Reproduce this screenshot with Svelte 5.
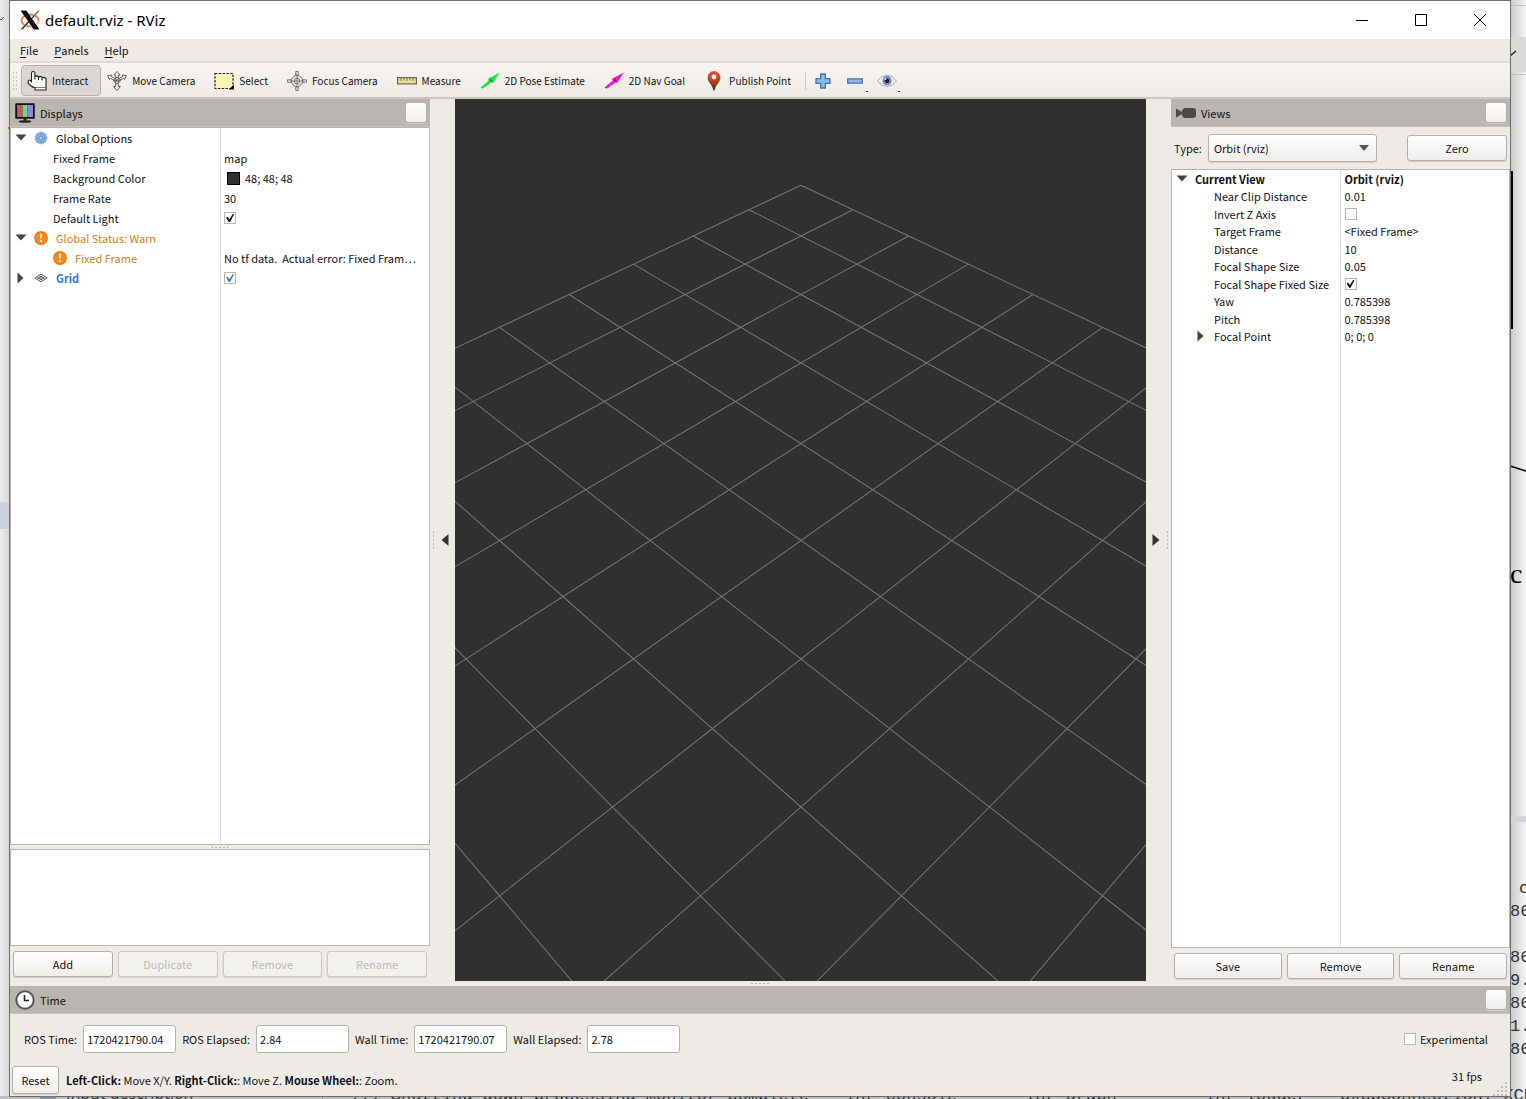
<script>
  const menus = ["File", "Panels", "Help"];

  const tools = [
    { icon: "hand", label: "Interact", active: true },
    { icon: "move", label: "Move Camera" },
    { icon: "select", label: "Select" },
    { icon: "focus", label: "Focus Camera" },
    { icon: "measure", label: "Measure" },
    { icon: "arrow", label: "2D Pose Estimate", color: "#1ee63c", dark: "#0fa326" },
    { icon: "arrow", label: "2D Nav Goal", color: "#fb14d8", dark: "#a80b92" },
    { icon: "pin", label: "Publish Point" },
  ];

  let displays = $state([
    { name: "Global Options", depth: 0, open: true, icon: "gear" },
    { name: "Fixed Frame", depth: 1, value: "map" },
    { name: "Background Color", depth: 1, value: "48; 48; 48", swatch: true },
    { name: "Frame Rate", depth: 1, value: "30" },
    { name: "Default Light", depth: 1, checked: true },
    { name: "Global Status: Warn", depth: 0, open: true, icon: "warn", kind: "warn" },
    {
      name: "Fixed Frame",
      depth: 1,
      icon: "warn",
      kind: "warn",
      value: "No tf data.\u00a0 Actual error: Fixed Fram⋯",
    },
    { name: "Grid", depth: 0, open: false, icon: "grid", kind: "enabled", checked: true },
  ]);

  let view = $state([
    { name: "Current View", depth: 0, open: true, kind: "bold", value: "Orbit (rviz)" },
    { name: "Near Clip Distance", depth: 1, value: "0.01" },
    { name: "Invert Z Axis", depth: 1, checked: false },
    { name: "Target Frame", depth: 1, value: "<Fixed Frame>" },
    { name: "Distance", depth: 1, value: "10" },
    { name: "Focal Shape Size", depth: 1, value: "0.05" },
    { name: "Focal Shape Fixed Size", depth: 1, checked: true },
    { name: "Yaw", depth: 1, value: "0.785398" },
    { name: "Pitch", depth: 1, value: "0.785398" },
    { name: "Focal Point", depth: 1, open: false, sub: true, value: "0; 0; 0" },
  ]);

  const clocks = [
    { id: "ros-time", label: "ROS Time:", value: "1720421790.04" },
    { id: "ros-elapsed", label: "ROS Elapsed:", value: "2.84" },
    { id: "wall-time", label: "Wall Time:", value: "1720421790.07" },
    { id: "wall-elapsed", label: "Wall Elapsed:", value: "2.78" },
  ];

  // orbit camera: distance 10, yaw and pitch 45deg, vertical fov 45deg
  const FOCAL = 441 / Math.tan(Math.PI / 8);

  function project(x, y) {
    const depth = 10 + (x + y) / 2;
    return [
      (FOCAL * (x - y) * Math.SQRT1_2) / depth,
      (-FOCAL * (x + y)) / 2 / depth,
    ];
  }

  const gridLines = [];
  for (let i = -5; i <= 5; i++) {
    gridLines.push([project(i, -5), project(i, 5)]);
    gridLines.push([project(-5, i), project(5, i)]);
  }
</script>

{#snippet arrow(open)}
  <svg class="twisty" width="12" height="12" viewBox="0 0 12 12" aria-hidden="true">
    {#if open}
      <path d="M0.5 2.5h11L6 8.5z" fill="#444" />
    {:else}
      <path d="M2.5 0.5v11L8.5 6z" fill="#444" />
    {/if}
  </svg>
{/snippet}

{#snippet rowIcon(icon)}
  <svg class="row-icon" width="14" height="14" viewBox="0 0 14 14" aria-hidden="true">
    {#if icon === "gear"}
      <circle cx="7" cy="7" r="5.7" fill="#7ba4d9" stroke="#8fb2e0" stroke-width="1.6" stroke-dasharray="2 1" />
      <circle cx="7" cy="7" r="3.3" fill="none" stroke="#a9c6ec" stroke-width="0.8" />
      <path d="M7 2v10M2 7h10M3.5 3.5l7 7M10.5 3.5l-7 7" stroke="#5f8cc8" stroke-width="0.6" />
      <circle cx="7" cy="7" r="1.2" fill="#b9d1f0" />
    {:else if icon === "warn"}
      <circle cx="7" cy="7" r="6.9" fill="#e8760c" />
      <circle cx="7" cy="7" r="5.8" fill="#f68a1e" />
      <path d="M6 2.7h2l-.4 5.3h-1.2z" fill="#fff" />
      <circle cx="7" cy="10.2" r="1.1" fill="#fff" />
    {:else}
      <path
        d="M7 3.2 13.2 7 7 10.8 0.8 7zM4.9 4.5l6.2 3.8M9.1 4.5 2.9 8.3M2.9 5.7l6.2 3.8M11.1 5.7 4.9 9.5"
        fill="none"
        stroke="#555"
        stroke-width="0.9"
      />
    {/if}
  </svg>
{/snippet}

{#snippet tree(rows, label, dense)}
  <div class="tree">
    <table class:dense aria-label={label}>
      <tbody>
        {#each rows as row}
          <tr class={row.kind}>
            <td>
              <div class="cell" class:child={row.depth === 1} class:sub={row.sub}>
                {#if row.open !== undefined}{@render arrow(row.open)}{/if}
                {#if row.icon}{@render rowIcon(row.icon)}{/if}
                <span>{row.name}</span>
              </div>
            </td>
            <td>
              <div class="cell value">
                {#if row.swatch}<span class="swatch"></span>{/if}
                {#if row.checked !== undefined}
                  <input type="checkbox" bind:checked={row.checked} aria-label={row.name} />
                {/if}
                {#if row.value}<span>{row.value}</span>{/if}
              </div>
            </td>
          </tr>
        {/each}
      </tbody>
    </table>
  </div>
{/snippet}

<div class="desktop">
  <!-- whatever is open behind the RViz window -->
  <svg class="backdrop" viewBox="0 0 1526 1099" preserveAspectRatio="xMaxYMax meet" aria-hidden="true">
    <defs>
      <linearGradient id="shade-right">
        <stop offset="0" stop-color="#c9c9c9" />
        <stop offset="1" stop-color="#f5f5f5" />
      </linearGradient>
      <linearGradient id="shade-left">
        <stop offset="0" stop-color="#ececec" />
        <stop offset="1" stop-color="#d6d6d6" />
      </linearGradient>
    </defs>
    <rect width="10" height="1099" fill="url(#shade-left)" />
    <rect y="502" width="10" height="27" fill="#cdd0df" />
    <path d="M0 19l1 1 3-3" fill="none" stroke="#445" />
    <rect x="8" y="127" width="1" height="2" fill="#b5651d" />
    <rect x="1510" width="16" height="1099" fill="url(#shade-right)" />
    <path d="M1510 5.5h16M1510 74.5h16" stroke="#c4c4c4" />
    <rect x="1510" y="37" width="16" height="35" fill="#d9d9d9" />
    <path d="M1510 56l6-5" stroke="#222" stroke-width="1.5" />
    <rect x="1510" y="171" width="3" height="158" fill="#000" />
    <path d="M1510 466l16 5" stroke="#000" stroke-width="1.5" />
    <text x="1510" y="583" class="serif">c</text>
    <rect x="1510" y="816" width="16" height="6" fill="#d4d4d8" />
    <g class="mono">
      <text x="1519" y="893">c</text>
      <text x="1510" y="916">86</text>
      <text x="1510" y="962">86</text>
      <text x="1510" y="985">9.</text>
      <text x="1510" y="1008">86</text>
      <text x="1510" y="1031">1.</text>
      <text x="1510" y="1054">86</text>
    </g>
    <rect y="1096" width="1510" height="3" fill="#bdbdbd" />
    <rect x="40" y="1096" width="16" height="3" fill="#7c8f9b" />
    <path d="M322.5 1096v3" stroke="#999" />
    <text x="66" y="1099" class="sans">Input description</text>
    <g class="mono">
      <text x="350" y="1100">... Shutting down processing monitor complete</text>
      <text x="845" y="1100">lnr console</text>
      <text x="1025" y="1100">lnr graph</text>
      <text x="1205" y="1100">lnr logger</text>
      <text x="1340" y="1100">QxcbConnection: XCB</text>
    </g>
  </svg>

  <div class="window">
    <header class="titlebar">
      <svg width="20" height="20" viewBox="0 0 20 20" aria-hidden="true">
        <ellipse cx="10" cy="10.5" rx="8.5" ry="6" fill="none" stroke="#f0783c" stroke-width="1.8" />
        <path d="M10 16.5a8.5 6 0 0 0 8.5-6" fill="none" stroke="#f6d0ae" stroke-width="2" />
        <path d="M18 .5h1.8L3 19.5H.3z" fill="#222" stroke="#fff" stroke-width="0.6" />
        <path d="M.5 .5h5.8L19.5 19.5h-5.8z" fill="#111" />
      </svg>
      <h1>default.rviz - RViz</h1>
      <div class="window-controls">
        <button aria-label="Minimize">
          <svg width="12" height="12" viewBox="0 0 12 12"><path d="M0 6.5h12" stroke="#000" /></svg>
        </button>
        <button aria-label="Maximize">
          <svg width="12" height="12" viewBox="0 0 12 12"><path d="M.5 .5h11v11H.5z" fill="none" stroke="#000" /></svg>
        </button>
        <button aria-label="Close">
          <svg width="12" height="12" viewBox="0 0 12 12"><path d="M0 0l12 12M12 0 0 12" stroke="#000" /></svg>
        </button>
      </div>
    </header>

    <nav class="menubar">
      {#each menus as menu}
        <button><u>{menu[0]}</u>{menu.slice(1)}</button>
      {/each}
    </nav>

    <div class="toolbar" role="toolbar" aria-label="Tools">
      <span class="grip"></span>
      {#each tools as tool}
        <button class="tool" class:active={tool.active}>
          <svg width="20" height="20" viewBox="0 0 20 20" aria-hidden="true">
            {#if tool.icon === "hand"}
              <path
                d="M4.5 11V2.2a1.7 1.7 0 0 1 3.4 0V8 5.8q1.900-1.800 3.600 0V8.500 6q2-1.500 3.600.3V9 6.800q2-1.200 3.900.8V19H8V17Q3 15 1.200 12 .6 9.300 2.200 9q1.500.2 2.300 2z"
                fill="#fff"
                stroke="#222"
                stroke-width="1.1"
                stroke-linejoin="round"
              />
              <path d="M8 16.5h11" stroke="#777" />
            {:else if tool.icon === "move"}
              <g fill="#f6f6f6" stroke="#555" stroke-width="0.9">
                <path d="M.7 4.5l4.3-.3-.8 1.3L10 8.5l5.800-3-.8-1.300 4.300.3-1.800 4-.8-1.300L10 10.800 3.300 7.200l-.8 1.300z" />
                <path d="M10 .5l3 3.500h-1.700v11.500H13.500L10 19.500l-3.500-4h2.200V4H7z" />
                <path d="M10 6l4 3.500-4 3.500-4-3.500z" fill="none" />
              </g>
              <circle cx="10" cy="9.5" r="1.2" fill="#777" />
            {:else if tool.icon === "select"}
              <rect x="1" y="2.5" width="18" height="15" fill="#fdf3b4" stroke="#222" stroke-width="1.2" stroke-dasharray="2.5 1.3" />
              <path d="M19.8 13.5v5h-5z" fill="#000" />
            {:else if tool.icon === "focus"}
              <g fill="none" stroke="#777" stroke-width="1">
                <path d="M8.8 .5h2.4v19H8.8zM.5 8.8v2.4h19V8.8z" fill="#e6e6e6" />
                <circle cx="10" cy="10" r="5.5" fill="#ececec" />
                <circle cx="10" cy="10" r="2.8" />
                <path d="M10 3v14M3 10h14" />
              </g>
            {:else if tool.icon === "measure"}
              <rect x=".6" y="6.6" width="18.8" height="6.3" fill="#eadf9d" stroke="#6d6746" stroke-width="1.2" />
              <path d="M4 7v3M7 7v2.5M10 7v3M13 7v2.5M16 7v3" stroke="#6d6746" stroke-width="0.9" />
            {:else if tool.icon === "arrow"}
              <path d="M.5 16.5L9 9.3 7.5 8 19.7 1.5 13.5 11.5 12 11.2 2.5 17.8z" fill={tool.color} />
              <path d="M9 9.3l2-1.8 2.5 4-1.5-.3z" fill={tool.dark} />
            {:else}
              <path d="M10 0a6.5 6.5 0 0 1 6.5 6.5C16.5 11 12 13 10.5 19.5h-1C8 13 3.5 11 3.5 6.5A6.5 6.5 0 0 1 10 0z" fill="url(#pin-fill)" />
              <circle cx="10" cy="6" r="2.4" fill="#fff" />
              <defs>
                <linearGradient id="pin-fill" x2="0" y2="1">
                  <stop offset="0" stop-color="#e8573c" />
                  <stop offset=".45" stop-color="#c0432a" />
                  <stop offset="1" stop-color="#4d2b12" />
                </linearGradient>
              </defs>
            {/if}
          </svg>
          {tool.label}
        </button>
      {/each}
      <span class="separator"></span>
      <button class="mini" aria-label="Add tool">
        <svg width="16" height="16" viewBox="0 0 16 16">
          <path d="M5.7 1h4.6v4.7H15v4.6h-4.7V15H5.7v-4.7H1V5.7h4.7z" fill="#8db8e8" stroke="#3f73b5" stroke-width="1.3" />
        </svg>
      </button>
      <button class="mini menu" aria-label="Remove tool">
        <svg width="16" height="16" viewBox="0 0 16 16">
          <path d="M.7 5.9h14.6v4.2H.7z" fill="#8db8e8" stroke="#3f73b5" stroke-width="1.3" />
        </svg>
      </button>
      <button class="mini menu" aria-label="Toolbar visibility">
        <svg width="20" height="16" viewBox="0 0 20 16">
          <path d="M.5 8Q4.5 2.2 10 2.2T19.5 8q-4 5.500-9.500 5.500T.5 8z" fill="#f1f1f1" stroke="#a9a9a9" />
          <circle cx="10" cy="7.7" r="4.6" fill="#7186c2" />
          <circle cx="10" cy="7.7" r="2.2" fill="#10131f" />
          <circle cx="8.5" cy="6" r="1" fill="#dfe6fa" />
        </svg>
      </button>
    </div>

    <main>
      <section class="dock">
        <div class="dock-header">
          <svg width="20" height="20" viewBox="0 0 20 20" aria-hidden="true">
            <path d="M1 1h18v14H1z" fill="#111" stroke="#111" stroke-width="1.5" stroke-linejoin="round" />
            <path d="M2 2h5.5v12H2z" fill="#b9605f" />
            <path d="M7.5 2h5v12h-5z" fill="#7fd08a" />
            <path d="M12.5 2H18v12h-5.5z" fill="#8b8be0" />
            <path d="M8.5 15.5h3v2h-3z" fill="#222" />
            <ellipse cx="10" cy="18.5" rx="6.5" ry="1.3" fill="#222" />
          </svg>
          <h2>Displays</h2>
          <button class="btn close" aria-label="Close Displays"></button>
        </div>
        {@render tree(displays, "Displays", false)}
        <div class="splitter horizontal"><span class="dots"></span></div>
        <div class="help"></div>
        <div class="actions">
          <button class="btn">Add</button>
          <button class="btn" disabled>Duplicate</button>
          <button class="btn" disabled>Remove</button>
          <button class="btn" disabled>Rename</button>
        </div>
      </section>

      <div class="splitter left">
        <span class="dots tall"></span>
        <button class="collapse" aria-label="Hide left dock">
          <svg width="8" height="12" viewBox="0 0 8 12"><path d="M7.5 0v12L.5 6z" fill="#333" /></svg>
        </button>
      </div>

      <svg class="render" viewBox="-346 -441 691 881" preserveAspectRatio="xMidYMid slice" role="img" aria-label="3D view">
        {#each gridLines as [from, to]}
          <line x1={from[0]} y1={from[1]} x2={to[0]} y2={to[1]} />
        {/each}
      </svg>

      <div class="splitter right">
        <button class="collapse" aria-label="Hide right dock">
          <svg width="8" height="12" viewBox="0 0 8 12"><path d="M.5 0v12l7-6z" fill="#333" /></svg>
        </button>
        <span class="dots tall"></span>
      </div>

      <section class="dock">
        <div class="dock-header">
          <svg width="20" height="20" viewBox="0 0 20 20" aria-hidden="true">
            <path d="M0 5.5L6 9V7.5Q7 5 9 5h8q3 0 3 3v4q0 3-3 3H9q-2 0-3-2.5V11L0 14.5z" fill="#4a4a4a" />
          </svg>
          <h2>Views</h2>
          <button class="btn close" aria-label="Close Views"></button>
        </div>
        <div class="view-type">
          <label for="view-type">Type:</label>
          <div class="select">
            <select id="view-type" class="btn">
              <option>Orbit (rviz)</option>
            </select>
            <svg width="10" height="6" viewBox="0 0 10 6" aria-hidden="true"><path d="M0 0h10L5 6z" fill="#555" /></svg>
          </div>
          <button class="btn zero">Zero</button>
        </div>
        {@render tree(view, "Current view", true)}
        <div class="actions view-actions">
          <button class="btn">Save</button>
          <button class="btn">Remove</button>
          <button class="btn">Rename</button>
        </div>
      </section>
    </main>

    <div class="splitter bottom"><span class="dots"></span></div>

    <section class="time">
      <div class="dock-header">
        <svg width="20" height="20" viewBox="0 0 20 20" aria-hidden="true">
          <circle cx="10" cy="10" r="8.7" fill="#fff" stroke="#555" stroke-width="2" />
          <path d="M9.5 5v5.5H14" fill="none" stroke="#222" stroke-width="1.6" />
        </svg>
        <h2>Time</h2>
        <button class="btn close" aria-label="Close Time"></button>
      </div>
      <div class="clocks">
        {#each clocks as clock}
          <label for={clock.id}>{clock.label}</label>
          <input id={clock.id} type="text" value={clock.value} readonly />
        {/each}
        <label class="experimental"><input type="checkbox" />Experimental</label>
      </div>
    </section>

    <footer>
      <button class="btn reset">Reset</button>
      <p><b>Left-Click:</b> Move X/Y. <b>Right-Click:</b>: Move Z. <b>Mouse Wheel:</b>: Zoom.</p>
      <span class="fps">31 fps</span>
      <span class="size-grip"></span>
    </footer>
  </div>
</div>

<style>
  .desktop {
    position: relative;
    display: flex;
    height: 100vh;
    min-height: 700px;
    overflow: hidden;
    box-sizing: border-box;
    padding: 0 15px 2px 9px;
    background: #f3f3f3;
    font-family: "Noto Sans CJK SC", "Noto Sans", sans-serif;
    font-size: 11px;
    line-height: 16px;
    color: #111;
  }

  .backdrop {
    position: absolute;
    inset: 0;
    width: 100%;
    height: 100%;
  }

  .mono {
    font: 17px "Liberation Mono", monospace;
    fill: #333;
  }

  .sans {
    font: 16px "Open Sans", sans-serif;
    fill: #333;
  }

  .serif {
    font: 28px "Liberation Serif", serif;
    fill: #000;
  }

  .window {
    position: relative;
    flex: 1;
    min-width: 0;
    display: flex;
    flex-direction: column;
    box-sizing: border-box;
    border: 1px solid #6e6e6e;
    background: #eeebe6;
  }

  button,
  input,
  select {
    font: inherit;
    color: inherit;
    margin: 0;
  }

  button {
    display: inline-flex;
    align-items: center;
    justify-content: center;
    padding: 0;
    border: none;
    background: none;
  }

  h1,
  h2,
  p {
    margin: 0;
    font-size: inherit;
    font-weight: normal;
  }

  /* title bar and menus */
  .titlebar {
    display: flex;
    align-items: center;
    height: 38px;
    padding: 0 1px 0 10px;
    gap: 5px;
    background: #fff;
    flex-shrink: 0;
  }

  h1 {
    font-family: "Noto Sans", "Open Sans", sans-serif;
    font-size: 15px;
    color: #000;
  }

  .window-controls {
    display: flex;
    margin-left: auto;
    align-self: stretch;
  }

  .window-controls button {
    width: 59px;
  }

  .menubar {
    display: flex;
    align-items: center;
    gap: 16px;
    height: 22px;
    padding: 0 10px;
    box-sizing: border-box;
    flex-shrink: 0;
  }

  .menubar u {
    text-underline-offset: 2px;
  }

  /* toolbar */
  .toolbar {
    display: flex;
    align-items: center;
    height: 38px;
    padding: 1px 2px 0;
    box-sizing: border-box;
    border-top: 2px solid #e0dcd7;
    border-bottom: 2px solid #cbc7c1;
    background: linear-gradient(#f8f5f0, #eeebe6);
    flex-shrink: 0;
  }

  .grip {
    width: 9px;
    height: 20px;
    background: radial-gradient(circle, #c9c5c0 1px, transparent 1px) 0 0 / 3px 4px;
    background-clip: content-box;
    padding-right: 3px;
    box-sizing: border-box;
  }

  .tool {
    gap: 5px;
    height: 31px;
    padding: 0 12px 0 5px;
    border: 1px solid transparent;
    border-radius: 4px;
    box-sizing: border-box;
    font-size: 10px;
    white-space: nowrap;
  }

  .tool.active {
    border-color: #b5b1ac;
    background: #dad6d2;
  }

  .separator {
    width: 1px;
    height: 18px;
    margin: 0 1px;
    background: #cdc9c4;
  }

  .mini {
    position: relative;
    width: 32px;
    height: 30px;
  }

  .mini.menu::after {
    content: "";
    position: absolute;
    right: 3px;
    bottom: 4px;
    width: 2px;
    height: 1px;
    background: #444;
  }

  /* docks */
  main {
    flex: 1;
    min-height: 0;
    display: grid;
    grid-template-columns: 420px 25px minmax(0, 1fr) 25px 339px;
  }

  .dock {
    display: flex;
    flex-direction: column;
    min-height: 0;
  }

  .dock-header {
    display: flex;
    align-items: center;
    gap: 5px;
    height: 28px;
    padding: 0 3px 0 5px;
    box-sizing: border-box;
    border-bottom: 1px solid #c6c2be;
    background: #b9b5b1;
    flex-shrink: 0;
  }

  .btn {
    box-sizing: border-box;
    height: 26px;
    border: 1px solid #b3afaa;
    border-radius: 3px;
    background: linear-gradient(#fefefe, #f0eeeb);
    box-shadow: 0 1px 1px #d2cec9;
  }

  .btn:disabled {
    border-color: #cbc7c2;
    background: #f3f1ee;
    color: #bdbab7;
  }

  .close {
    width: 22px;
    height: 21px;
    margin-left: auto;
  }

  .tree,
  .help {
    box-sizing: border-box;
    border: 1px solid #b9b5b1;
    background: #fff;
  }

  .tree {
    flex: 1;
    min-height: 0;
    overflow: hidden;
    background: linear-gradient(#dcdcdc, #dcdcdc) 50% 0 / 1px 100% no-repeat #fff;
  }

  .help {
    height: 97px;
    flex-shrink: 0;
  }

  table {
    width: 100%;
    border-collapse: collapse;
    table-layout: fixed;
  }

  td {
    height: 20px;
    padding: 0;
  }

  .dense {
    height: 175px;
  }

  .dense td {
    height: auto;
  }

  .dense .cell {
    height: 17px;
  }

  .cell {
    display: flex;
    align-items: center;
    height: 20px;
    padding-left: 4px;
    white-space: nowrap;
  }

  .cell.child {
    padding-left: 42px;
  }

  .cell.sub {
    padding-left: 23px;
  }

  .twisty {
    margin-right: 7px;
    flex-shrink: 0;
  }

  .row-icon {
    margin-right: 8px;
    flex-shrink: 0;
  }

  .swatch {
    width: 13px;
    height: 13px;
    margin: 0 5px 0 3px;
    border: 1px solid #000;
    box-sizing: border-box;
    background: #303030;
  }

  .warn {
    color: #cb8216;
  }

  .warn .value {
    color: #111;
  }

  .enabled {
    color: #2f7bcf;
    font-weight: bold;
  }

  .bold {
    font-weight: bold;
  }

  input[type="checkbox"] {
    appearance: none;
    width: 12px;
    height: 12px;
    box-sizing: border-box;
    border: 1px solid #b9b5b0;
    background: #fff;
  }

  input[type="checkbox"]:checked::before {
    content: "";
    display: block;
    width: 8px;
    height: 8px;
    margin: 1px;
    background: currentColor;
    clip-path: polygon(0 45%, 22% 38%, 42% 65%, 85% 0, 100% 5%, 50% 100%, 35% 100%);
  }

  .actions {
    display: flex;
    gap: 5px;
    padding: 5px 3px 4px;
    flex-shrink: 0;
  }

  .view-actions {
    padding-bottom: 2px;
  }

  .actions .btn {
    flex: 1;
  }

  .view-type {
    display: flex;
    align-items: center;
    gap: 6px;
    height: 42px;
    padding: 0 3px;
    box-sizing: border-box;
  }

  .select {
    position: relative;
    width: 169px;
  }

  .select select {
    appearance: none;
    width: 100%;
    height: 28px;
    padding: 0 5px;
  }

  .select svg {
    position: absolute;
    right: 8px;
    top: 11px;
    pointer-events: none;
  }

  .zero {
    width: 100px;
    margin-left: auto;
  }

  /* splitters */
  .splitter {
    display: flex;
    align-items: center;
    justify-content: center;
    flex-shrink: 0;
  }

  .splitter.horizontal {
    height: 4px;
  }

  .splitter.bottom {
    height: 5px;
  }

  .splitter.left,
  .splitter.right {
    justify-content: space-between;
    padding: 0 6px 0 2px;
  }

  .splitter.right {
    padding: 0 2px 0 6px;
  }

  .dots {
    width: 21px;
    height: 3px;
    background: radial-gradient(circle, #bfbbb6 1px, transparent 1px) 0 0 / 4px 3px;
  }

  .dots.tall {
    width: 3px;
    height: 21px;
    background-size: 3px 4px;
  }

  .render {
    width: 100%;
    height: 100%;
    min-height: 0;
    background: #303030;
  }

  .render line {
    stroke: #777;
    stroke-width: 1;
  }

  /* time panel */
  .clocks {
    display: flex;
    align-items: center;
    gap: 6px;
    height: 50px;
    padding: 0 22px 0 14px;
  }

  .clocks input[type="text"] {
    width: 93px;
    height: 28px;
    padding: 0 3px;
    box-sizing: border-box;
    border: 1px solid #b5b1ac;
    border-radius: 3px;
    background: #fff;
  }

  .experimental {
    display: flex;
    align-items: center;
    gap: 4px;
    margin-left: auto;
  }

  footer {
    display: flex;
    align-items: center;
    gap: 7px;
    height: 32px;
    padding: 0 3px 0 2px;
    flex-shrink: 0;
  }

  .reset {
    width: 47px;
    height: 28px;
  }

  .fps {
    margin-left: auto;
    align-self: flex-start;
    padding: 4px 3px 0 0;
  }

  .size-grip {
    width: 15px;
    height: 15px;
    align-self: flex-end;
    background: radial-gradient(circle, #bfbbb6 1px, transparent 1px) 0 0 / 4px 4px;
    clip-path: polygon(100% 0, 100% 100%, 0 100%);
  }
</style>
